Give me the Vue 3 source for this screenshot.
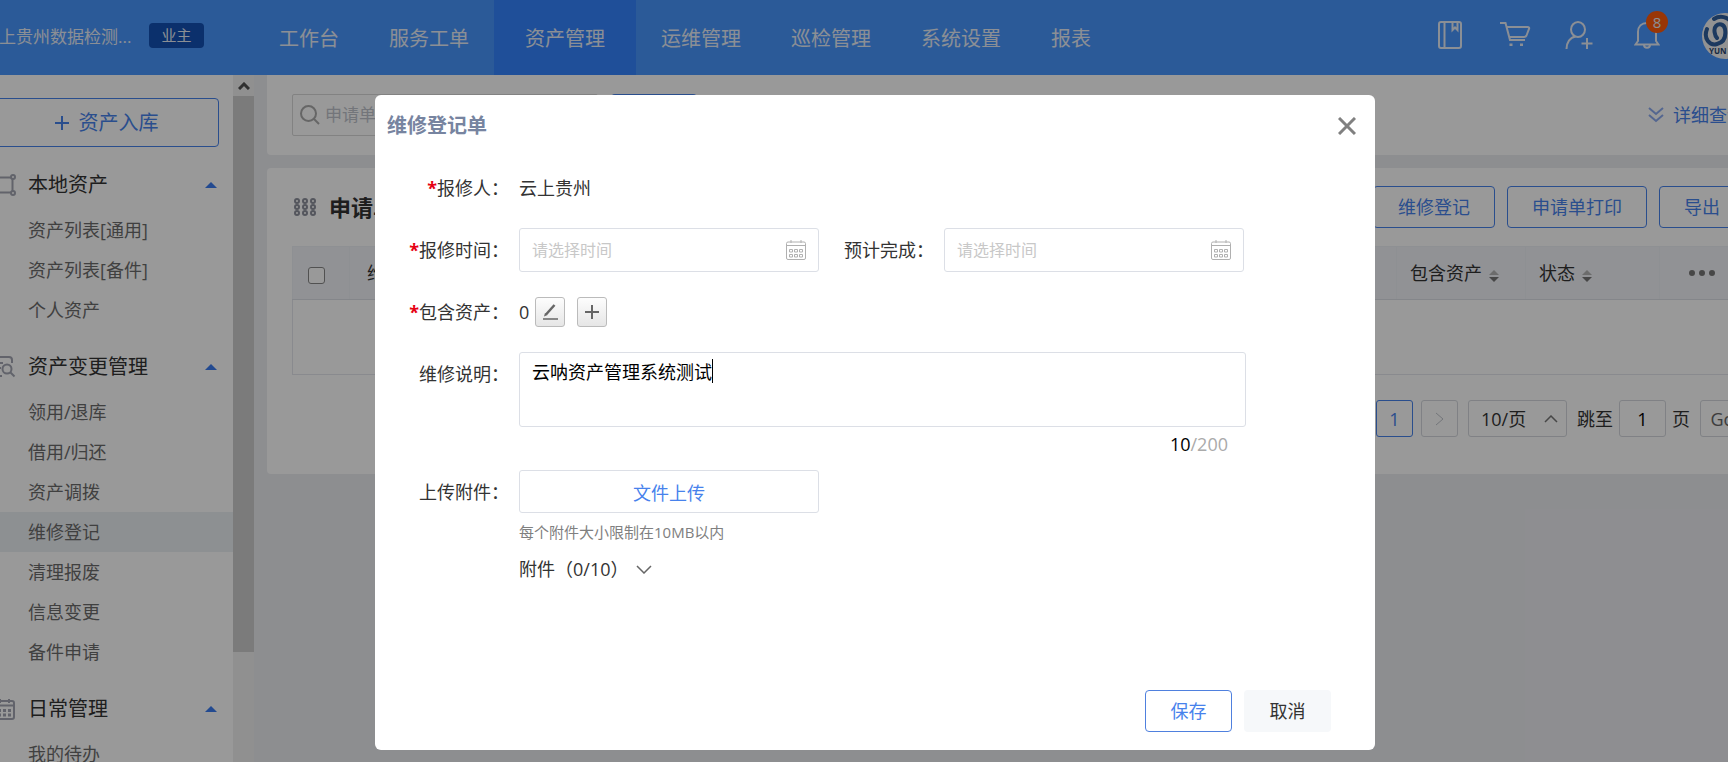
<script setup>
import { ref, computed } from 'vue'

const tabs = ['工作台', '服务工单', '资产管理', '运维管理', '巡检管理', '系统设置', '报表']
const activeTab = ref('资产管理')

const sections = [
  { title: '本地资产', icon: 'frame', items: ['资产列表[通用]', '资产列表[备件]', '个人资产'] },
  {
    title: '资产变更管理',
    icon: 'search',
    items: ['领用/退库', '借用/归还', '资产调拨', '维修登记', '清理报废', '信息变更', '备件申请'],
  },
  { title: '日常管理', icon: 'calendar', items: ['我的待办'] },
]
const activeItem = ref('维修登记')

const note = ref('云呐资产管理系统测试')
const noteFont = 18
const notePad = 13
const caretLeft = computed(() => notePad + note.value.length * noteFont + 'px')
const jumpPage = ref('1')
</script>

<template>
  <div class="page">
    <header class="top">
      <span class="company">云上贵州数据检测...</span>
      <span class="role">业主</span>
      <nav class="tabs">
        <a
          v-for="t in tabs"
          :key="t"
          href="#"
          class="tab"
          :class="{ active: t === activeTab }"
          @click.prevent="activeTab = t"
        >{{ t }}</a>
      </nav>
      <div class="tools">
        <button class="tool" aria-label="手册">
          <svg width="24" height="28" viewBox="0 0 24 28">
            <rect x="1" y="1" width="22" height="26" rx="2" />
            <path d="M6.500 1v26M14.500 1v8l2.500-2.500 2.500 2.500V1" />
          </svg>
        </button>
        <button class="tool cart" aria-label="购物车">
          <svg width="32" height="26" viewBox="0 0 32 26">
            <path d="M1 1h5.500l4.500 17h15M8 5h20.500c1.500 0 2 1 1.500 2l-2.500 6.500c-.5 1.200-1 1.500-2.500 1.500H10.500" />
            <path d="M12 21.500v2.500M22.500 21.500v2.500" stroke-width="3" />
          </svg>
        </button>
        <button class="tool user" aria-label="添加用户">
          <svg width="28" height="29" viewBox="0 0 28 29">
            <ellipse cx="13" cy="8.500" rx="7" ry="7.500" />
            <path d="M1.500 28c0-6.500 3.500-11.500 9-12.500M22 17v11M16.500 22.500h11" />
          </svg>
        </button>
        <button class="tool bell" aria-label="通知">
          <svg width="26" height="28" viewBox="0 0 26 28">
            <path d="M1.500 23.500h23L22 20v-9c0-5.500-3.500-9-9-9s-9 3.500-9 9v9zM13 2V.5M10 24c0 3.500 6 3.500 6 0" />
          </svg>
          <span class="count">8</span>
        </button>
        <svg class="avatar" width="46" height="46" viewBox="0 0 46 46">
          <circle cx="23" cy="23" r="23" fill="#f4f4f4" />
          <g fill="none" stroke="#2f5f9e" stroke-width="4" stroke-linecap="round">
            <path d="M5 16C1 26 8 33 15 31c8-2 9-9 8-15-1-5-6-6-9-3s-1 10 1 12" />
            <path d="M12 6c6-4 14-2 17 3 3 7-1 13 3 17 3 3 9 0 10-5" />
          </g>
          <text x="7" y="41" font-size="8" font-weight="700" fill="#27446e">YUN NA</text>
        </svg>
      </div>
    </header>

    <div class="body">
      <aside class="side">
        <button class="stock-in">
          <svg width="14" height="14" viewBox="0 0 14 14"><path d="M7 0v14M0 7h14" stroke="currentColor" stroke-width="2" /></svg>
          资产入库
        </button>
        <section v-for="s in sections" :key="s.title" class="group">
          <h2 class="group-head">
            <svg v-if="s.icon === 'frame'" class="gi" width="22" height="22" viewBox="0 0 22 22">
              <path d="M5 3.500h12M5 18.500h12M3.500 5v12M18.500 5v12" />
              <circle cx="3" cy="3" r="2" /><circle cx="19" cy="3" r="2" />
              <circle cx="3" cy="19" r="2" /><circle cx="19" cy="19" r="2" />
            </svg>
            <svg v-else-if="s.icon === 'search'" class="gi" width="22" height="22" viewBox="0 0 22 22">
              <path d="M1 6V3c0-1 1-2 2-2h12c2 0 3 1 3 3v3M1 15v3c0 1.500 1 2 2 2h5M4 7h5M4 12h3" />
              <circle cx="13" cy="13" r="4.500" /><path d="M16.500 16.500l4 4" />
            </svg>
            <svg v-else class="gi" width="22" height="22" viewBox="0 0 22 22">
              <rect x="1" y="3" width="19" height="18" rx="2" />
              <path d="M1 7.500h19M6 1v4M15 1v4" />
              <path d="M4 12.500h13M4 17h13" stroke-width="3" stroke-dasharray="3 2" />
            </svg>
            <span>{{ s.title }}</span>
            <i class="tri"></i>
          </h2>
          <a
            v-for="it in s.items"
            :key="it"
            href="#"
            class="item"
            :class="{ active: it === activeItem }"
            @click.prevent="activeItem = it"
          >{{ it }}</a>
        </section>
      </aside>

      <div class="scroll">
        <div class="scroll-up">
          <svg width="12" height="8" viewBox="0 0 12 8"><path d="M1 7l5-5 5 5" fill="none" stroke="#505050" stroke-width="3" /></svg>
        </div>
        <div class="thumb"></div>
      </div>

      <main class="main">
        <div class="card filter">
          <label class="search">
            <svg width="20" height="20" viewBox="0 0 20 20"><circle cx="8.500" cy="8.500" r="7.500" /><path d="M14 14l5 5" /></svg>
            <input type="text" placeholder="申请单号" aria-label="申请单号" />
          </label>
          <button class="query">查询</button>
          <a href="#" class="detail" @click.prevent>
            <svg width="16" height="16" viewBox="0 0 16 16"><path d="M1 1l7 6 7-6M1 8l7 6 7-6" fill="none" stroke="currentColor" stroke-width="2" /></svg>
            详细查询
          </a>
        </div>

        <div class="card list">
          <div class="bar">
            <svg class="dots" width="22" height="18" viewBox="0 0 22 18">
              <template v-for="r in 3" :key="r">
                <circle v-for="c in 3" :key="c" :cx="c * 8 - 5" :cy="r * 6 - 3" r="2" />
              </template>
            </svg>
            <h1>申请单列表</h1>
            <div class="acts">
              <button class="line-btn">维修登记</button>
              <button class="line-btn">申请单打印</button>
              <button class="line-btn">导出</button>
            </div>
          </div>

          <table class="grid">
            <thead>
              <tr>
                <th class="c-check"><input type="checkbox" aria-label="全选" /></th>
                <th class="c-no">维修单号</th>
                <th class="c-assets">包含资产<svg class="sort" width="10" height="12" viewBox="0 0 10 12"><path d="M0 5l5-5 5 5z" fill="#b4b4b4" /><path d="M0 7l5 5 5-5z" fill="#777" /></svg></th>
                <th class="c-state">状态<svg class="sort" width="10" height="12" viewBox="0 0 10 12"><path d="M0 5l5-5 5 5z" fill="#b4b4b4" /><path d="M0 7l5 5 5-5z" fill="#777" /></svg></th>
                <th class="c-more">
                  <svg width="26" height="6" viewBox="0 0 26 6" fill="#777"><circle cx="3" cy="3" r="3" /><circle cx="13" cy="3" r="3" /><circle cx="23" cy="3" r="3" /></svg>
                </th>
              </tr>
            </thead>
            <tbody>
              <tr><td colspan="5"></td></tr>
            </tbody>
          </table>

          <div class="pager">
            <button class="pg on">1</button>
            <button class="pg next" aria-label="下一页">
              <svg width="9" height="14" viewBox="0 0 9 14"><path d="M1 1l7 6-7 6" fill="none" stroke="currentColor" /></svg>
            </button>
            <label class="size">
              <select aria-label="每页条数"><option>10/页</option></select>
              <svg width="14" height="8" viewBox="0 0 14 8"><path d="M1 7l6-6 6 6" fill="none" stroke="#777" stroke-width="1.500" /></svg>
            </label>
            <label class="jump">跳至 <input v-model="jumpPage" type="text" /> 页</label>
            <button class="go">Go</button>
          </div>
        </div>
      </main>
    </div>

    <div class="mask">
      <div class="modal" role="dialog" aria-labelledby="dlg-title">
        <div class="modal-head">
          <h2 id="dlg-title">维修登记单</h2>
          <button class="close" aria-label="关闭">
            <svg width="18" height="18" viewBox="0 0 18 18"><path d="M1 1l16 16M17 1L1 17" stroke="#808080" stroke-width="3" /></svg>
          </button>
        </div>

        <form class="form" @submit.prevent>
          <div class="row">
            <span class="lab"><b>*</b>报修人：</span>
            <span class="val">云上贵州</span>
          </div>

          <div class="row">
            <label class="lab" for="t1"><b>*</b>报修时间：</label>
            <div class="date">
              <input id="t1" type="text" placeholder="请选择时间" />
              <svg width="20" height="20" viewBox="0 0 20 20">
                <rect x="0.500" y="2" width="19" height="17.500" rx="1.500" />
                <path d="M0 5.500h20M5 0v3M15 0v3" />
                <path d="M3.500 9.500h3v2.500h-3zM8.500 9.500h3v2.500h-3zM13.500 9.500h3v2.500h-3zM3.500 14.500h3v2.500h-3zM8.500 14.500h3v2.500h-3zM13.500 14.500h3v2.500h-3z" />
              </svg>
            </div>
            <label class="lab second" for="t2">预计完成：</label>
            <div class="date">
              <input id="t2" type="text" placeholder="请选择时间" />
              <svg width="20" height="20" viewBox="0 0 20 20">
                <rect x="0.500" y="2" width="19" height="17.500" rx="1.500" />
                <path d="M0 5.500h20M5 0v3M15 0v3" />
                <path d="M3.500 9.500h3v2.500h-3zM8.500 9.500h3v2.500h-3zM13.500 9.500h3v2.500h-3zM3.500 14.500h3v2.500h-3zM8.500 14.500h3v2.500h-3zM13.500 14.500h3v2.500h-3z" />
              </svg>
            </div>
          </div>

          <div class="row">
            <span class="lab"><b>*</b>包含资产：</span>
            <div class="assets">
              <span>0</span>
              <button class="sq" type="button" aria-label="编辑">
                <svg width="16" height="16" viewBox="0 0 16 16"><path d="M4 10.500L12.500 1" stroke="#666" stroke-width="2.500" /><path d="M2 12.500l1-3.500 2.500 2z" fill="#666" /><path d="M1 15h15" stroke="#666" stroke-width="1.500" /></svg>
              </button>
              <button class="sq plus" type="button" aria-label="添加">
                <svg width="16" height="16" viewBox="0 0 16 16"><path d="M8 1v14M1 8h14" stroke="#666" stroke-width="2" /></svg>
              </button>
            </div>
          </div>

          <div class="row note-row">
            <label class="lab" for="note">维修说明：</label>
            <div class="note">
              <textarea id="note" v-model="note" maxlength="200"></textarea>
              <i class="caret" :style="{ left: caretLeft }"></i>
              <p class="len"><em>{{ note.length }}</em>/200</p>
            </div>
          </div>

          <div class="row">
            <span class="lab">上传附件：</span>
            <div class="upload">
              <button class="file" type="button">文件上传</button>
              <p class="hint">每个附件大小限制在10MB以内</p>
              <button class="attach" type="button">
                附件（0/10）
                <svg width="16" height="9" viewBox="0 0 16 9"><path d="M1 1l7 7 7-7" fill="none" stroke="#666" stroke-width="1.500" /></svg>
              </button>
            </div>
          </div>
        </form>

        <div class="modal-foot">
          <button class="save">保存</button>
          <button class="cancel">取消</button>
        </div>
      </div>
    </div>
  </div>
</template>

<style>
body {
  overflow: hidden;
}
</style>

<style scoped>
* {
  box-sizing: border-box;
}
.page {
  position: relative;
  height: 100vh;
  margin: 0 -42px 0 -20px;
  overflow: hidden;
  display: flex;
  flex-direction: column;
  background: #ecedf1;
  color: #333;
  font: 18px/24px "Open Sans", "Noto Sans CJK SC", sans-serif;
}
h1,
h2,
p {
  margin: 0;
}
a {
  text-decoration: none;
  color: inherit;
}
button,
input,
select,
textarea {
  font: inherit;
  color: inherit;
  margin: 0;
  padding: 0;
  background: none;
  border: 0;
  outline: none;
}
svg {
  flex: none;
}

/* header */
.top {
  flex: none;
  display: flex;
  align-items: center;
  height: 75px;
  padding: 0 20px 0 2px;
  background: #4996fe;
  color: #e8eef8;
}
.company {
  flex: none;
  width: 167px;
  padding-bottom: 2px;
  font-size: 17px;
  white-space: nowrap;
}
.role {
  flex: none;
  width: 55px;
  height: 25px;
  margin-bottom: 4px;
  border-radius: 4px;
  background: #1350b4;
  font-size: 15px;
  line-height: 25px;
  text-align: center;
}
.tabs {
  display: flex;
  margin-left: 50px;
}
.tab {
  height: 75px;
  padding: 0 25px;
  font-size: 20px;
  line-height: 78px;
  white-space: nowrap;
}
.tab.active {
  padding: 0 31px;
  background: #3484ff;
}
.tools {
  display: flex;
  align-items: center;
  margin-left: auto;
}
.tool {
  position: relative;
  display: flex;
  margin-bottom: 5px;
}
.tool svg {
  fill: none;
  stroke: #e8eef8;
  stroke-width: 2;
}
.cart {
  margin-left: 37px;
}
.user {
  margin-left: 34px;
}
.bell {
  margin-left: 41px;
}
.count {
  position: absolute;
  left: 12px;
  top: -10px;
  width: 22px;
  height: 22px;
  border-radius: 11px;
  background: #ff5a0a;
  font-size: 15px;
  line-height: 22px;
  text-align: center;
}
.avatar {
  margin: 0 2px 4px 42px;
}

/* sidebar */
.body {
  flex: 1;
  min-height: 0;
  display: flex;
}
.side {
  flex: none;
  width: 253px;
  padding-top: 23px;
  background: #fff;
  overflow: hidden;
}
.stock-in {
  display: flex;
  align-items: center;
  justify-content: center;
  gap: 10px;
  width: 225px;
  height: 49px;
  margin: 0 14px 13px;
  border: 1px solid #4782ec;
  border-radius: 4px;
  color: #4782ec;
  font-size: 20px;
}
.group {
  margin-bottom: 12px;
}
.group-head {
  display: flex;
  align-items: center;
  gap: 12px;
  height: 50px;
  padding: 0 16px 0 14px;
  font-size: 20px;
  font-weight: 400;
}
.gi {
  fill: none;
  stroke: #a3a6b2;
  stroke-width: 2;
}
.tri {
  margin-left: auto;
  border: 6px solid transparent;
  border-top: 0;
  border-bottom-color: #3b7cf0;
}
.item {
  display: block;
  height: 40px;
  padding-left: 48px;
  line-height: 40px;
  color: #6c6c6c;
}
.item.active {
  background: #ebf0f4;
}
.scroll {
  flex: none;
  width: 21px;
  background: #f1f1f1;
  display: flex;
  flex-direction: column;
}
.scroll-up {
  display: flex;
  align-items: center;
  justify-content: center;
  height: 21px;
}
.thumb {
  height: 81%;
  background: #cdcdcd;
}

/* main */
.main {
  flex: 1;
  min-width: 0;
  padding-left: 13px;
}
.card {
  background: #fff;
  border-radius: 0 0 4px 4px;
}
.filter {
  display: flex;
  align-items: center;
  height: 80px;
  padding: 0 25px;
}
.search {
  display: flex;
  align-items: center;
  gap: 5px;
  width: 306px;
  height: 42px;
  padding: 0 7px;
  border: 1px solid #d9d9d9;
  border-radius: 2px;
}
.search svg {
  fill: none;
  stroke: #aaa;
  stroke-width: 2;
}
.search input {
  flex: 1;
  min-width: 0;
  font-size: 17px;
}
input::placeholder {
  color: #c0c4cc;
  opacity: 1;
}
.query {
  width: 86px;
  height: 42px;
  margin-left: 13px;
  border-radius: 4px;
  background: #4782ec;
  color: #fff;
}
.detail {
  display: flex;
  align-items: center;
  gap: 9px;
  margin-left: auto;
  color: #4782ec;
}
.detail svg {
  color: #8cabf0;
}
.list {
  margin-top: 13px;
  padding: 18px 25px 37px;
  border-radius: 4px;
}
.bar {
  display: flex;
  align-items: center;
  height: 42px;
}
.dots {
  margin: 0 13px 0 2px;
  fill: none;
  stroke: #8c8f9c;
  stroke-width: 2;
}
.bar h1 {
  font-size: 22px;
  font-weight: 700;
}
.acts {
  display: flex;
  gap: 12px;
  margin-left: auto;
}
.line-btn {
  height: 42px;
  padding: 0 24px;
  border: 1px solid #4782ec;
  border-radius: 4px;
  color: #4782ec;
}
.grid {
  width: 100%;
  margin-top: 18px;
  border-collapse: collapse;
  table-layout: fixed;
  border: 1px solid #e4e7ed;
}
.grid th {
  height: 53px;
  padding: 0 0 0 13px;
  background: #f2f4f9;
  border: 1px solid #edf0f6;
  border-bottom-color: #dcdfe6;
  font-weight: 400;
  line-height: 22px;
  text-align: left;
}
.grid td {
  height: 75px;
  padding: 0;
}
.grid .c-check {
  width: 57px;
  padding-left: 15px;
}
.grid .c-no {
  padding-left: 17px;
}
.c-assets {
  width: 129px;
}
.c-state {
  width: 134px;
}
.grid .c-more {
  width: 85px;
  padding: 0;
  text-align: center;
}
.c-more svg {
  display: block;
  margin: 0 auto;
}
.c-check input {
  appearance: none;
  display: block;
  width: 17px;
  height: 17px;
  margin-top: 4px;
  border: 1px solid #888;
  border-radius: 3px;
  background: #fff;
}
.sort {
  margin-left: 7px;
  vertical-align: -2px;
}
.pager {
  display: flex;
  align-items: center;
  justify-content: flex-end;
  margin-top: 25px;
}
.pg,
.go,
.size,
.jump input {
  height: 37px;
  border: 1px solid #d5d8de;
  border-radius: 3px;
}
.pg {
  width: 37px;
}
.pg.on {
  border-color: #4782ec;
  color: #4782ec;
}
.pg.next {
  margin: 0 10px 0 8px;
  color: #c0c4cc;
}
.size {
  display: flex;
  align-items: center;
  width: 99px;
  padding: 0 8px 0 12px;
}
.size select {
  appearance: none;
  flex: 1;
}
.jump {
  display: flex;
  align-items: center;
  gap: 6px;
  margin: 0 10px;
}
.jump input {
  width: 47px;
  text-align: center;
  color: #000;
}
.go {
  width: 45px;
  color: #666;
}

/* dialog */
.mask {
  position: absolute;
  inset: 0;
  display: flex;
  align-items: flex-start;
  justify-content: center;
  padding-top: 95px;
  background: rgba(0, 0, 0, 0.4);
}
.modal {
  width: 1000px;
  max-width: 100%;
  border-radius: 6px;
  background: #fff;
}
.modal-head {
  display: flex;
  align-items: center;
  justify-content: space-between;
  height: 61px;
  padding: 0 19px 0 12px;
}
.modal-head h2 {
  font-size: 20px;
  font-weight: 700;
  color: #7784a0;
}
.close {
  display: flex;
}
.form {
  min-height: 534px;
  padding: 10px 0 0;
}
.row {
  display: flex;
  gap: 10px;
  margin-bottom: 18px;
  line-height: 44px;
}
.lab {
  flex: none;
  width: 134px;
  text-align: right;
  white-space: nowrap;
}
.lab b {
  font-weight: 700;
  color: #e60012;
}
.second {
  width: 105px;
}
.date {
  display: flex;
  align-items: center;
  width: 300px;
  height: 44px;
  padding: 0 12px;
  border: 1px solid #dcdfe6;
  border-radius: 3px;
}
.date input {
  flex: 1;
  min-width: 0;
  font-size: 16px;
}
.date input::placeholder {
  color: #c8c8c8;
}
.date svg {
  fill: none;
  stroke: #b0b0b0;
}
.assets {
  display: flex;
  align-items: center;
}
.sq {
  display: flex;
  align-items: center;
  justify-content: center;
  width: 30px;
  height: 30px;
  margin-left: 6px;
  border: 1px solid #bbb;
  border-radius: 3px;
  background: linear-gradient(#fdfdfd, #e6e6e6);
}
.sq.plus {
  margin-left: 12px;
}
.note-row {
  margin-bottom: 13px;
}
.note {
  position: relative;
  width: 727px;
}
.note textarea {
  display: block;
  width: 100%;
  height: 75px;
  padding: 7px 12px;
  border: 1px solid #dcdfe6;
  border-radius: 3px;
  line-height: 24px;
  color: #000;
  resize: none;
}
.caret {
  position: absolute;
  top: 7px;
  width: 1px;
  height: 24px;
  background: #000;
}
.len {
  margin-top: 4px;
  padding-right: 18px;
  line-height: 26px;
  text-align: right;
  color: #aaa;
}
.len em {
  font-style: normal;
  color: #000;
}
.upload {
  width: 300px;
}
.file {
  display: block;
  width: 100%;
  height: 43px;
  padding-bottom: 2px;
  border: 1px solid #dcdfe6;
  border-radius: 3px;
  color: #4782ec;
}
.hint {
  margin: 8px 0 12px;
  font-size: 15px;
  line-height: 22px;
  color: #808080;
}
.attach {
  display: flex;
  align-items: center;
  gap: 8px;
  line-height: 28px;
}
.modal-foot {
  display: flex;
  justify-content: flex-end;
  gap: 12px;
  padding: 0 44px 18px;
}
.modal-foot button {
  width: 87px;
  height: 42px;
  border-radius: 4px;
}
.save {
  border: 1px solid #4f80de;
  color: #4782ec;
}
.cancel {
  background: #f6f8fa;
}
</style>
